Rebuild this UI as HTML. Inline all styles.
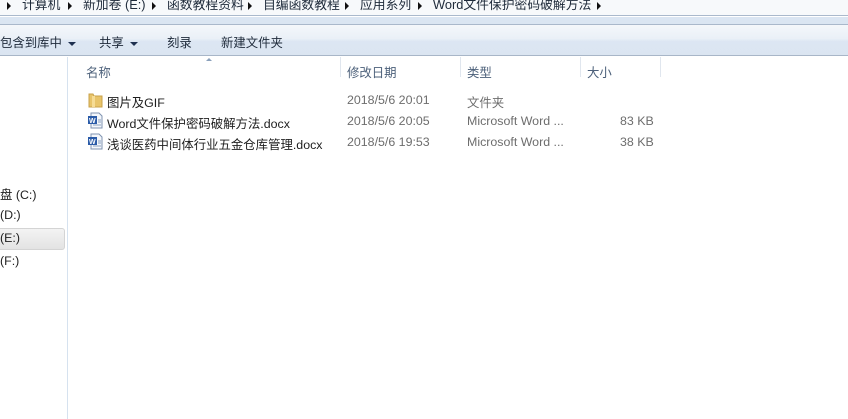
<!DOCTYPE html>
<html><head><meta charset="utf-8"><style>
*{margin:0;padding:0;box-sizing:border-box}
body{width:848px;height:419px;overflow:hidden;background:#fff;font-family:"Liberation Sans","Noto Sans CJK SC",sans-serif;font-size:12.4px;color:#1e1e1e;position:relative}
.a{position:absolute;white-space:nowrap}
.tri{position:absolute;top:2px;width:0;height:0;border-top:4px solid transparent;border-bottom:4px solid transparent;border-left:4px solid #111}
.dn{display:inline-block;width:0;height:0;border-left:4px solid transparent;border-right:4px solid transparent;border-top:4px solid #1e3050;vertical-align:middle;margin-left:6px}
.hdr{color:#4c607a}
.grey{color:#6d6d6d}
.bc{position:absolute;top:-4px;font-size:12.8px;color:#1e2a3a;line-height:18px;white-space:nowrap}
</style></head><body>
<div class="a" style="left:0;top:0;width:848px;height:16px;background:#f7f9fb;border-bottom:1px solid #aab9cc"></div>
<div class="tri" style="left:7px"></div>
<div class="bc" style="left:22px">计算机</div>
<div class="tri" style="left:68px"></div>
<div class="bc" style="left:83px">新加卷 (E:)</div>
<div class="tri" style="left:152px"></div>
<div class="bc" style="left:167px">函数教程资料</div>
<div class="tri" style="left:248px"></div>
<div class="bc" style="left:263px">自编函数教程</div>
<div class="tri" style="left:345px"></div>
<div class="bc" style="left:360px">应用系列</div>
<div class="tri" style="left:418px"></div>
<div class="bc" style="left:433px">Word文件保护密码破解方法</div>
<div class="tri" style="left:597px"></div>
<div class="a" style="left:0;top:17px;width:848px;height:8px;background:#dae5f2;border-bottom:1px solid #a9b8cb"></div>
<div class="a" style="left:0;top:25px;width:848px;height:31px;background:linear-gradient(#f4f7fb,#eaf0f7 45%,#dce6f3 55%,#dbe5f1);border-bottom:1px solid #a8b6c8"></div>
<div class="a" style="left:0;top:33px;color:#1e2a3a">包含到库中<i class="dn"></i></div>
<div class="a" style="left:99px;top:33px;color:#1e2a3a">共享<i class="dn"></i></div>
<div class="a" style="left:167px;top:33px;color:#1e2a3a">刻录</div>
<div class="a" style="left:221px;top:33px;color:#1e2a3a">新建文件夹</div>
<div class="a" style="left:67px;top:57px;width:1px;height:362px;background:#d6e2ef"></div>
<div class="a" style="left:340px;top:57px;width:1px;height:20px;background:#e0e6ee"></div>
<div class="a" style="left:460px;top:57px;width:1px;height:20px;background:#e0e6ee"></div>
<div class="a" style="left:580px;top:57px;width:1px;height:20px;background:#e0e6ee"></div>
<div class="a" style="left:660px;top:57px;width:1px;height:20px;background:#e0e6ee"></div>
<div class="a" style="left:206px;top:58px;width:0;height:0;border-left:3px solid transparent;border-right:3px solid transparent;border-bottom:3px solid #8aa0bb"></div>
<div class="a hdr" style="left:86px;top:63px">名称</div>
<div class="a hdr" style="left:347px;top:63px">修改日期</div>
<div class="a hdr" style="left:467px;top:63px">类型</div>
<div class="a hdr" style="left:587px;top:63px">大小</div>

<svg class="a" style="left:88px;top:92px" width="15" height="16" viewBox="0 0 15 16"><path d="M1 2h4l1 2h8v11H1z" fill="#e8c46a" stroke="#c9a24a"/><rect x="4" y="4" width="3" height="11" fill="#f6dc95"/></svg>
<div class="a" style="left:107px;top:93px">图片及GIF</div>
<div class="a grey" style="left:347px;top:93px">2018/5/6 20:01</div>
<div class="a grey" style="left:467px;top:93px">文件夹</div>

<svg class="a" style="left:87px;top:112px" width="16" height="17" viewBox="0 0 16 17"><path d="M4 1h8l3 3v12H4z" fill="#f4f7fb" stroke="#7f93b0"/><rect x="1" y="4" width="9" height="8" fill="#2a5ba8"/><text x="2" y="11" font-size="7" fill="#fff" font-family="Liberation Sans" font-weight="bold">W</text><path d="M11 8h3M11 10h3M6 13h8" stroke="#8aa0c0"/></svg>
<div class="a" style="left:107px;top:114px">Word文件保护密码破解方法.docx</div>
<div class="a grey" style="left:347px;top:114px">2018/5/6 20:05</div>
<div class="a grey" style="left:467px;top:114px">Microsoft Word ...</div>
<div class="a grey" style="left:620px;top:114px">83 KB</div>

<svg class="a" style="left:87px;top:133px" width="16" height="17" viewBox="0 0 16 17"><path d="M4 1h8l3 3v12H4z" fill="#f4f7fb" stroke="#7f93b0"/><rect x="1" y="4" width="9" height="8" fill="#2a5ba8"/><text x="2" y="11" font-size="7" fill="#fff" font-family="Liberation Sans" font-weight="bold">W</text><path d="M11 8h3M11 10h3M6 13h8" stroke="#8aa0c0"/></svg>
<div class="a" style="left:107px;top:135px">浅谈医药中间体行业五金仓库管理.docx</div>
<div class="a grey" style="left:347px;top:135px">2018/5/6 19:53</div>
<div class="a grey" style="left:467px;top:135px">Microsoft Word ...</div>
<div class="a grey" style="left:620px;top:135px">38 KB</div>

<div class="a" style="left:-3px;top:228px;width:68px;height:22px;background:linear-gradient(#f3f3f3,#e3e3e3);border:1px solid #d4d4d4;border-radius:3px"></div>
<div class="a" style="left:0;top:185px">盘 (C:)</div>
<div class="a" style="left:0;top:208px">(D:)</div>
<div class="a" style="left:0;top:231px">(E:)</div>
<div class="a" style="left:0;top:254px">(F:)</div>
</body></html>
